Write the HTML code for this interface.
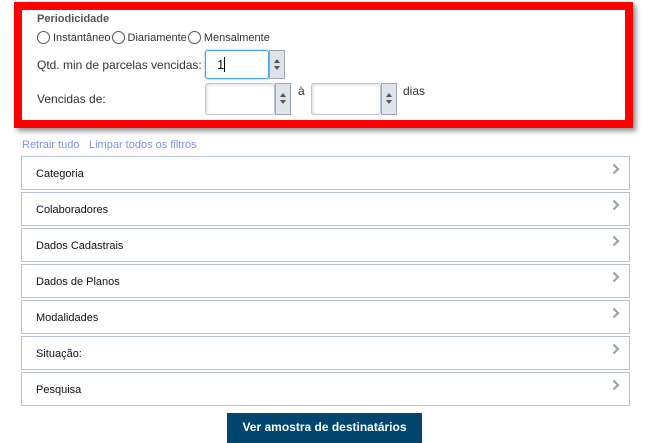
<!DOCTYPE html>
<html><head><meta charset="utf-8"><style>
*{box-sizing:border-box;margin:0;padding:0}
body{width:650px;height:440px;background:#fff;font-family:"Liberation Sans",Arial,sans-serif;position:relative;overflow:hidden;color:#333}
.a{position:absolute}
.frame{left:14px;top:2px;width:619px;height:126px;border:8px solid #f00;box-shadow:3px 3px 5px rgba(0,0,0,.45);background:#fff}
.inp{position:absolute;background:#fff;border:1px solid #b5c6dd;border-radius:3px;box-shadow:inset 1px 1px 3px #ddd}
.spin{position:absolute;background:#dfe3ea;border:1px solid #9aa7b8;}
.spin:before{content:"";position:absolute;left:50%;top:50%;margin-left:-3px;margin-top:-6px;border:3px solid transparent;border-bottom:4px solid #555;border-top:0}
.spin:after{content:"";position:absolute;left:50%;top:50%;margin-left:-3px;margin-top:1px;border:3px solid transparent;border-top:4px solid #555;border-bottom:0}
.radio{display:inline-block;width:13px;height:13px;border:1px solid #555;border-radius:50%;vertical-align:-3px;margin-right:3px}
.row{position:absolute;left:21px;width:609px;height:34px;border:2px solid #b8c3d1;border-width:1.5px;font-size:11px;color:#111;padding:11px 0 0 14px}
.row svg{position:absolute;right:9px;top:6px}
</style></head><body>
<div class="a frame"></div>
<div class="a" style="left:37px;top:13px;font-size:11px;font-weight:bold;color:#555">Periodicidade</div>
<div class="a" style="left:37px;top:31px;font-size:11px;color:#333;white-space:nowrap"><span class="radio"></span>Instantâneo<span class="radio" style="margin-left:1px"></span>Diariamente<span class="radio" style="margin-left:1px"></span>Mensalmente</div>
<div class="a" style="left:37px;top:58px;font-size:12px;color:#333">Qtd. min de parcelas vencidas:</div>
<div class="inp" style="left:205px;top:50px;width:64px;height:29px;border:1px solid #4aa3e8;box-shadow:0 0 2px #6bb6f0"></div>
<div class="a" style="left:217px;top:57px;font-size:13px;color:#111">1<span style="display:inline-block;width:1px;height:15px;background:#000;vertical-align:-3px"></span></div>
<div class="spin" style="left:269px;top:50px;width:16px;height:29px"></div>
<div class="a" style="left:37px;top:92px;font-size:12px;color:#333">Vencidas de:</div>
<div class="inp" style="left:205px;top:83px;width:70px;height:32px"></div>
<div class="spin" style="left:275px;top:83px;width:16px;height:32px"></div>
<div class="a" style="left:298px;top:84px;font-size:12px">à</div>
<div class="inp" style="left:311px;top:83px;width:70px;height:32px"></div>
<div class="spin" style="left:381px;top:83px;width:16px;height:32px"></div>
<div class="a" style="left:403px;top:84px;font-size:12px">dias</div>
<div class="a" style="left:22px;top:139px;font-size:11px;color:#7b93ec">Retrair tudo</div>
<div class="a" style="left:89px;top:139px;font-size:11px;color:#7b93ec">Limpar todos os filtros</div>
<div class="row" style="top:156px">Categoria<svg width="8" height="12" viewBox="0 0 8 12"><path d="M1.5 1.5L6 6L1.5 10.5" stroke="#9aa3ad" stroke-width="2.2" fill="none"/></svg></div>
<div class="row" style="top:192px">Colaboradores<svg width="8" height="12" viewBox="0 0 8 12"><path d="M1.5 1.5L6 6L1.5 10.5" stroke="#9aa3ad" stroke-width="2.2" fill="none"/></svg></div>
<div class="row" style="top:228px">Dados Cadastrais<svg width="8" height="12" viewBox="0 0 8 12"><path d="M1.5 1.5L6 6L1.5 10.5" stroke="#9aa3ad" stroke-width="2.2" fill="none"/></svg></div>
<div class="row" style="top:264px">Dados de Planos<svg width="8" height="12" viewBox="0 0 8 12"><path d="M1.5 1.5L6 6L1.5 10.5" stroke="#9aa3ad" stroke-width="2.2" fill="none"/></svg></div>
<div class="row" style="top:300px">Modalidades<svg width="8" height="12" viewBox="0 0 8 12"><path d="M1.5 1.5L6 6L1.5 10.5" stroke="#9aa3ad" stroke-width="2.2" fill="none"/></svg></div>
<div class="row" style="top:336px">Situação:<svg width="8" height="12" viewBox="0 0 8 12"><path d="M1.5 1.5L6 6L1.5 10.5" stroke="#9aa3ad" stroke-width="2.2" fill="none"/></svg></div>
<div class="row" style="top:372px">Pesquisa<svg width="8" height="12" viewBox="0 0 8 12"><path d="M1.5 1.5L6 6L1.5 10.5" stroke="#9aa3ad" stroke-width="2.2" fill="none"/></svg></div>
<div class="a" style="left:227px;top:413px;width:195px;height:30px;background:#00466e;color:#fff;font-size:12px;font-weight:bold;text-align:center;padding-top:7px">Ver amostra de destinatários</div>
</body></html>
